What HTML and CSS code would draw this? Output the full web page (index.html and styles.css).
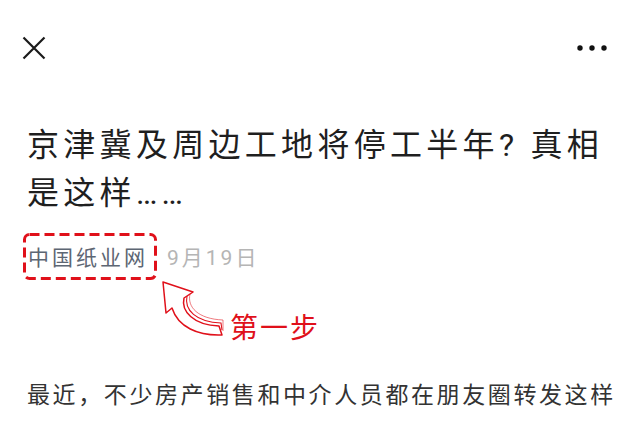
FILE: index.html
```html
<!DOCTYPE html>
<html lang="zh-CN">
<head>
<meta charset="utf-8">
<title>京津冀及周边工地将停工半年?真相是这样……</title>
<link rel="stylesheet" href="styles.css">
</head>
<body>
<div class="page">
  <header class="topbar">
    <span class="icon close" aria-label="关闭">
      <svg width="24" height="24" viewBox="0 0 24 24"><path d="M1.5 1.5 L22.5 22.5 M22.5 1.5 L1.5 22.5" stroke="#1a1a1a" stroke-width="2.2" stroke-linecap="butt" fill="none"/></svg>
    </span>
    <span class="icon more" aria-label="更多">
      <svg width="32" height="8" viewBox="0 0 32 8"><circle cx="4" cy="4" r="2.7" fill="#111"/><circle cx="16" cy="4" r="2.7" fill="#111"/><circle cx="28" cy="4" r="2.7" fill="#111"/></svg>
    </span>
  </header>

  <h1 class="title">京津冀及周边工地将停工半年? 真相是这样……</h1>

  <div class="meta">
    <span class="source">中国纸业网</span>
    <span class="date">9月19日</span>
  </div>

  <p class="content">最近，不少房产销售和中介人员都在朋友圈转发这样</p>

  <svg class="annot-layer" width="640" height="427" viewBox="0 0 640 427">
    <rect x="24.5" y="234.5" width="131" height="44" rx="5" ry="5" fill="none" stroke="#e0101a" stroke-width="3" stroke-dasharray="10 5"/>
    <path d="M163,282 L193,292 L184,298 C181,311 193,325 219,326 L222,335 C198,336 178,327 172,308 L166,313 Z" fill="#fff" stroke="#e0101a" stroke-width="1.5" stroke-linejoin="round"/>
    <path d="M187,296 C184,310 196,322 221,323 L222,330" fill="none" stroke="#e0101a" stroke-width="1.1"/>
    <path d="M190,294 C187,307 198,319 223,320 L223,331" fill="none" stroke="#e0101a" stroke-width="0.8" opacity="0.7"/>
  </svg>
  <span class="annot-text">第一步</span>
</div>
</body>
</html>
```

FILE: styles.css
```css
html, body {
  margin: 0;
  padding: 0;
  background: #fff;
}

.page {
  position: relative;
  width: 640px;
  height: 427px;
  overflow: hidden;
  font-family: Roboto, "Noto Sans CJK SC", "Noto Sans", sans-serif;
}

.topbar {
  height: 95px;
  display: flex;
  align-items: center;
  justify-content: space-between;
  padding: 0 32px 0 22px;
}

.icon {
  display: flex;
  align-items: center;
}

.title {
  margin: 26px 0 0 0;
  padding: 0 20px 0 27px;
  font-size: 32px;
  line-height: 48px;
  font-weight: normal;
  letter-spacing: 4.3px;
  color: #1f1f1f;
}

.meta {
  margin-top: 26px;
  padding-left: 28px;
  display: flex;
  align-items: center;
  font-size: 21px;
  line-height: 30px;
}

.source {
  color: #5d6673;
  letter-spacing: 3px;
}

.date {
  margin-left: 19px;
  color: #b5b5b5;
  letter-spacing: 3px;
}

.content {
  margin: 107px 0 0 0;
  padding: 0 10px 0 27px;
  font-size: 23px;
  line-height: 32px;
  letter-spacing: 2.6px;
  color: #333;
  white-space: nowrap;
}

.annot-layer {
  position: absolute;
  left: 0;
  top: 0;
  pointer-events: none;
}

.annot-text {
  position: absolute;
  left: 230px;
  top: 315px;
  font-size: 28px;
  line-height: 28px;
  letter-spacing: 2px;
  color: #e0101a;
}
```
